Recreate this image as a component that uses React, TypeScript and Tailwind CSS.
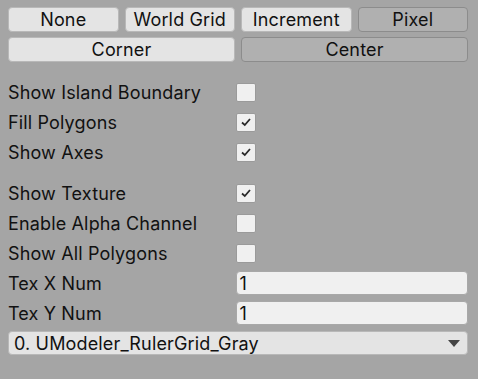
import React from "react";

const font = { fontFamily: "Inter, 'Noto Sans', sans-serif" };

function ToolButton({ label, active }: { label: string; active: boolean }) {
  return (
    <div
      className={
        "flex h-[25px] items-center justify-center rounded-[4px] border text-[18px] tracking-[0.15px] text-[#111] " +
        (active
          ? "border-[#b8b8b8] bg-[#e4e4e4]"
          : "border-[#8c8c8c] bg-[#b0b0b0]")
      }
    >
      {label}
    </div>
  );
}

function Checkbox({ checked }: { checked: boolean }) {
  return (
    <div className="flex h-[19px] w-[20px] items-center justify-center rounded-[2px] border border-[#9a9a9a] bg-[#f0f0f0]">
      {checked && (
        <svg width="14" height="12" viewBox="0 0 14 12">
          <path
            d="M3 6.5 L5.8 9 L11 3"
            fill="none"
            stroke="#2a2a2a"
            strokeWidth="1.8"
          />
        </svg>
      )}
    </div>
  );
}

function Row({ label, children }: { label: string; children: React.ReactNode }) {
  return (
    <div className="flex h-[30px] items-center">
      <div className="w-[228px] text-[18px] tracking-[0.15px] text-[#111]">{label}</div>
      {children}
    </div>
  );
}

function NumberField({ value }: { value: string }) {
  return (
    <div className="flex h-[24px] w-[233px] items-center rounded-[4px] border border-[#a8a8a8] bg-[#f0f0f0] px-[3px] text-[18px] text-[#111]">
      {value}
    </div>
  );
}

export default function App() {
  return (
    <div
      className="h-[379px] w-[478px] bg-[#a5a5a5] pt-[7px] pl-[8px] pr-[10px]"
      style={font}
    >
      <div className="grid grid-cols-4 gap-[6px]">
        <ToolButton label="None" active />
        <ToolButton label="World Grid" active />
        <ToolButton label="Increment" active />
        <ToolButton label="Pixel" active={false} />
      </div>
      <div className="mt-[5px] grid grid-cols-2 gap-[6px]">
        <ToolButton label="Corner" active />
        <ToolButton label="Center" active={false} />
      </div>

      <div className="mt-[15px]">
        <Row label="Show Island Boundary">
          <Checkbox checked={false} />
        </Row>
        <Row label="Fill Polygons">
          <Checkbox checked />
        </Row>
        <Row label="Show Axes">
          <Checkbox checked />
        </Row>
      </div>

      <div className="mt-[11px]">
        <Row label="Show Texture">
          <Checkbox checked />
        </Row>
        <Row label="Enable Alpha Channel">
          <Checkbox checked={false} />
        </Row>
        <Row label="Show All Polygons">
          <Checkbox checked={false} />
        </Row>
        <Row label="Tex X Num">
          <NumberField value="1" />
        </Row>
        <Row label="Tex Y Num">
          <NumberField value="1" />
        </Row>
        <div className="flex h-[30px] items-center">
          <div className="flex h-[24px] w-full items-center justify-between rounded-[4px] border border-[#b8b8b8] bg-[#e4e4e4] pl-[5px] pr-[7px] text-[18px] tracking-[0.15px] text-[#111]">
            <span>0. UModeler_RulerGrid_Gray</span>
            <svg width="12" height="7" viewBox="0 0 12 7">
              <path d="M0 0 H12 L6 7 Z" fill="#444" />
            </svg>
          </div>
        </div>
      </div>
    </div>
  );
}
